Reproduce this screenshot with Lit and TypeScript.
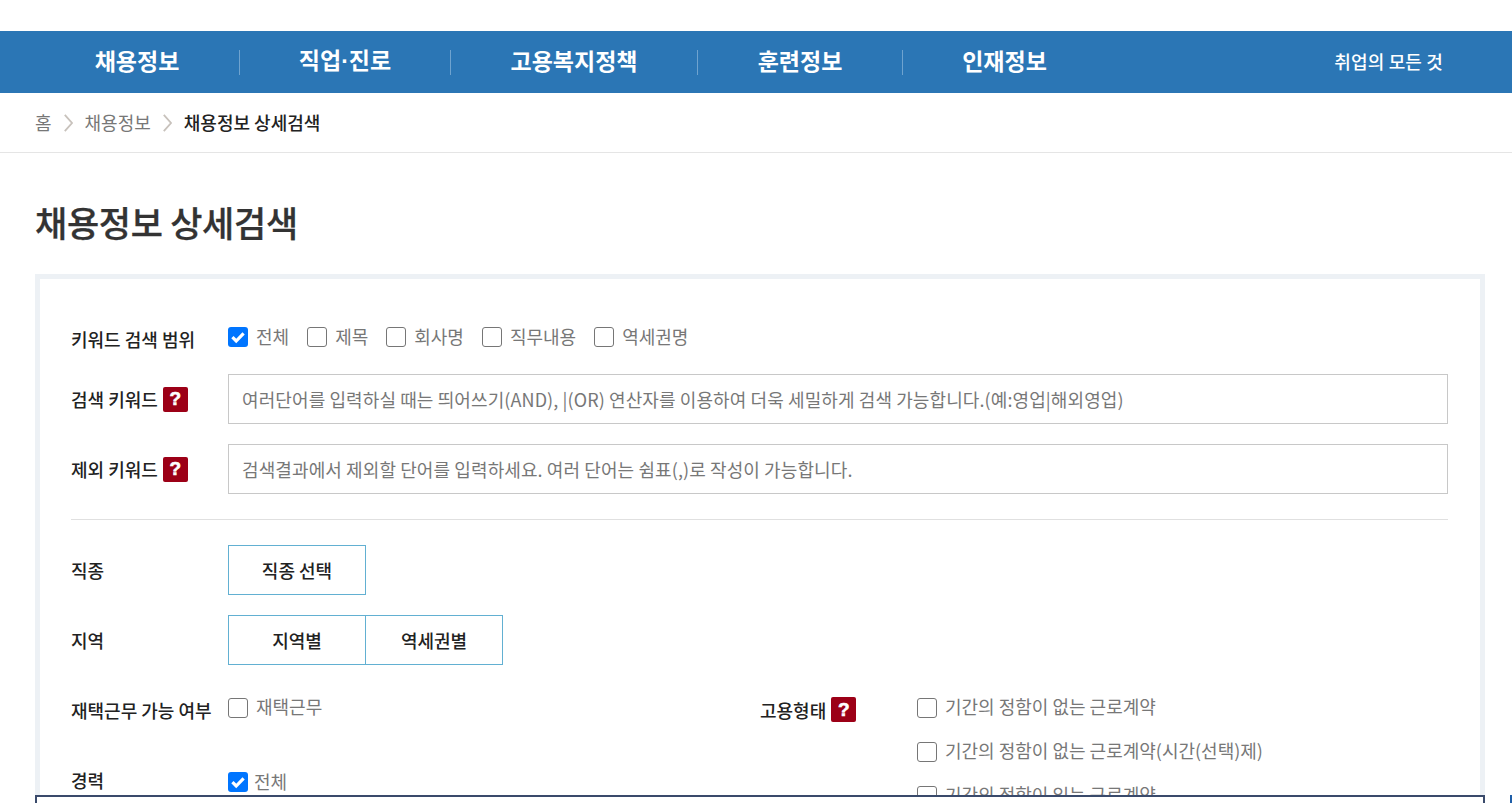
import { LitElement, html, css } from "lit";
import { customElement } from "lit/decorators.js";

@customElement("app-root")
export class AppRoot extends LitElement {
  static styles = css`
    :host { display: block; height: 803px; overflow: hidden; position: relative; background: #fff;
      font-family: "Noto Sans CJK KR", "Noto Sans", sans-serif; color: #222; }
    .top { height: 31px; }
    .nav { height: 62px; background: #2b76b5; display: flex; align-items: center; color: #fff; }
    .nav a { font-size: 23px; font-weight: 700; line-height: 26px; margin-top: -4px; }
    .dot { font-family: "Liberation Sans", sans-serif; }
    .nav .i { height: 25px; display: flex; align-items: center; justify-content: center; border-right: 1px solid #6fa3cf; box-sizing: border-box; }
    .i1 { width: 240px; padding-left: 35px; }
    .i2 { width: 211px; }
    .i3 { width: 247px; }
    .i4 { width: 205px; }
    .nav .i5 { width: 203px; border: none; }
    .nav .all { font-size: 18px; font-weight: 500; margin: -2px 69px 0 auto; letter-spacing: 0.15px; }
    .crumb { height: 59px; border-bottom: 1px solid #e5e5e5; display: flex; align-items: center; padding-left: 35px; font-size: 18px; color: #777; line-height: 24px; }
    .crumb span, .crumb b { transform: translateY(-1px); }
    .crumb svg { margin: 0 12px 0 12px; flex: none; }
    .crumb b { font-weight: 500; color: #222; }
    h1 { margin: 0; padding: 45px 0 0 35px; height: 76px; font-size: 35px; line-height: 48px; font-weight: 500; color: #333; letter-spacing: -0.3px; -webkit-text-stroke: 0.3px #333; }
    .box { margin: 0 27px 0 35px; border: 5px solid #edf1f5; border-bottom: none; padding: 0 32px 0 31px; height: 600px; overflow: hidden; }
    .row { display: flex; align-items: center; }
    .lab { width: 157px; font-size: 18px; font-weight: 500; color: #222; display: flex; align-items: center; flex: none; line-height: 24px; white-space: nowrap; }
    .q { width: 25px; height: 25px; flex: none; border-radius: 2px; background: #9c0017; color: #fff; font-weight: 900; font-size: 19px; display: flex; align-items: center; justify-content: center; margin-left: 5px; font-family: "Liberation Sans", sans-serif; -webkit-text-stroke: 0.6px #fff; }
    .cb { width: 20px; height: 20px; box-sizing: border-box; border: 1px solid #767676; border-radius: 3px; background: #fff; flex: none; display: block; }
    .cb.on { background: #0075ff; border: none; }
    .cb svg { display: block; }
    .opt { display: flex; align-items: center; font-size: 18px; color: #777; margin-right: 18px; line-height: 24px; }
    .opt span { margin-left: 8px; transform: translateY(-1px); }
    .scope { padding-top: 46px; height: 49px; align-items: flex-start; }
    .scope .lab { margin-top: 2px; }
    .inp { flex: 1; height: 50px; box-sizing: border-box; border: 1px solid #c8c8c8; font-size: 18px; color: #777; padding: 0 0 1px 13px; display: flex; align-items: center; letter-spacing: 0.1px; line-height: 24px; }
    .r2 { height: 50px; margin-bottom: 20px; }
    .r2.last { margin-bottom: 0; }
    hr { border: 0; border-top: 1px solid #e0e0e0; margin: 25px 0; }
    .btns { display: flex; }
    .btn { height: 50px; box-sizing: border-box; border: 1px solid #62b0d2; width: 138px; display: flex; align-items: center; justify-content: center; font-size: 18px; font-weight: 500; color: #222; }
    .btn + .btn { margin-left: -1px; }
    .two { display: flex; padding-top: 31px; }
    .col1 { width: 689px; flex: none; }
    .col2 { flex: 1; display: flex; }
    .r-home { height: 74px; align-items: flex-start; }
    .r-home .lab { margin-top: 2px; }
    .r-home .opt span { transform: translateY(-2px); }
    .r-exp { align-items: flex-start; }
    .r-exp .lab { margin-top: -2px; }
    .r-exp .opt span { margin-left: 6px; }
    .stack { margin-left: 61px; display: flex; flex-direction: column; gap: 20px; }
    .stack .opt span { transform: translateY(-2px); }
    .lab2 { width: 96px; flex: none; font-size: 18px; font-weight: 500; display: flex; align-items: center; height: 25px; margin-top: 1px; white-space: nowrap; }
    .overlay { position: absolute; left: 35px; top: 795px; width: 1450px; height: 12px; box-sizing: border-box; background: #fff; border: 2px solid #3a4a6b; }
    .stray { position: absolute; left: 1510px; top: 795px; width: 2px; height: 8px; background: #1f5fa8; }
    .chip { position: absolute; left: 1130px; top: 797px; width: 21px; height: 6px; background: #eee; }
  `;

  cb(on = false) {
    return html`<i class="cb ${on ? "on" : ""}">${on
      ? html`<svg width="20" height="20" viewBox="0 0 20 20"><path d="M4.4 10.2l3.8 3.8 7.4-7.6" fill="none" stroke="#fff" stroke-width="3.2"/></svg>`
      : ""}</i>`;
  }
  opt(t: string, on = false) {
    return html`<label class="opt">${this.cb(on)}<span>${t}</span></label>`;
  }
  chev() {
    return html`<svg width="9" height="18" viewBox="0 0 9 18"><path d="M.8.8L8 9 .8 17.2" fill="none" stroke="#c8c2bc" stroke-width="1.8"/></svg>`;
  }

  render() {
    return html`
      <div class="top"></div>
      <nav class="nav">
        <div class="i i1"><a>채용정보</a></div>
        <div class="i i2"><a>직업<span class="dot">·</span>진로</a></div>
        <div class="i i3"><a>고용복지정책</a></div>
        <div class="i i4"><a>훈련정보</a></div>
        <div class="i i5"><a>인재정보</a></div>
        <a class="all">취업의 모든 것</a>
      </nav>
      <div class="crumb"><span>홈</span>${this.chev()}<span>채용정보</span>${this.chev()}<b>채용정보 상세검색</b></div>
      <h1>채용정보 상세검색</h1>
      <section class="box">
        <div class="row scope">
          <div class="lab">키워드 검색 범위</div>
          ${this.opt("전체", true)}${this.opt("제목")}${this.opt("회사명")}${this.opt("직무내용")}${this.opt("역세권명")}
        </div>
        <div class="row r2">
          <div class="lab">검색 키워드<b class="q">?</b></div>
          <div class="inp">여러단어를 입력하실 때는 띄어쓰기(AND), |(OR) 연산자를 이용하여 더욱 세밀하게 검색 가능합니다.(예:영업|해외영업)</div>
        </div>
        <div class="row">
          <div class="lab">제외 키워드<b class="q">?</b></div>
          <div class="inp">검색결과에서 제외할 단어를 입력하세요. 여러 단어는 쉼표(,)로 작성이 가능합니다.</div>
        </div>
        <hr />
        <div class="row r2">
          <div class="lab">직종</div>
          <div class="btns"><div class="btn">직종 선택</div></div>
        </div>
        <div class="row r2 last">
          <div class="lab">지역</div>
          <div class="btns"><div class="btn">지역별</div><div class="btn">역세권별</div></div>
        </div>
        <div class="two">
          <div class="col1">
            <div class="row r-home">
              <div class="lab">재택근무 가능 여부</div>${this.opt("재택근무")}
            </div>
            <div class="row r-exp">
              <div class="lab">경력</div>${this.opt("전체", true)}
            </div>
          </div>
          <div class="col2">
            <div class="lab2">고용형태<b class="q">?</b></div>
            <div class="stack">
              ${this.opt("기간의 정함이 없는 근로계약")}
              ${this.opt("기간의 정함이 없는 근로계약(시간(선택)제)")}
              ${this.opt("기간의 정함이 있는 근로계약")}
            </div>
          </div>
        </div>
      </section>
      <div class="chip"></div>
      <div class="overlay"></div>
      <div class="stray"></div>
    `;
  }
}
